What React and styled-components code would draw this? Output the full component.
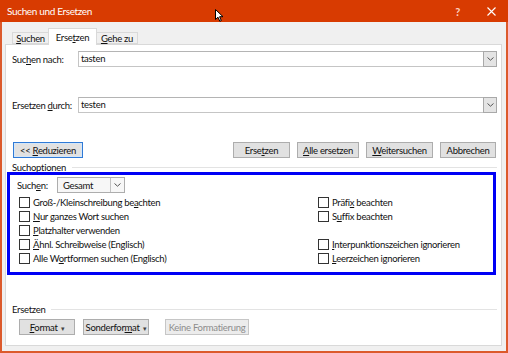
import React from "react";
import styled, { createGlobalStyle } from "styled-components";

const FONT = `Lato, "Open Sans", sans-serif`;

const GlobalStyle = createGlobalStyle`
	html, body {
		margin: 0;
		padding: 0;
		background: #ffffff;
	}
	body {
		font-family: ${FONT};
		font-size: 9.5px;
		letter-spacing: -0.3px;
		color: #111111;
	}
	* {
		box-sizing: border-box;
	}
	u {
		text-decoration-thickness: 1px;
		text-underline-offset: 1px;
	}
`;

const topOptions = [
	{ left: <>Groß-/Kleinschreibung be<u>a</u>chten</>, right: <>Präfi<u>x</u> beachten</> },
	{ left: <><u>N</u>ur ganzes Wort suchen</>, right: <>S<u>u</u>ffix beachten</> },
	{ left: <><u>P</u>latzhalter verwenden</>, right: null },
	{ left: <><u>Ä</u>hnl. Schreibweise (Englisch)</>, right: <><u>I</u>nterpunktionszeichen ignorieren</> },
	{ left: <>Alle W<u>o</u>rtformen suchen (Englisch)</>, right: <><u>L</u>eerzeichen ignorieren</> },
];

function Chevron() {
	return (
		<svg width="7" height="4" viewBox="0 0 7 4">
			<path d="M0.5 0.5 L3.5 3.2 L6.5 0.5" fill="none" stroke="#555" strokeWidth="1" />
		</svg>
	);
}

function Combo({ value }) {
	return (
		<ComboBox>
			<ComboText>{value}</ComboText>
			<ComboButton>
				<Chevron />
			</ComboButton>
		</ComboBox>
	);
}

function Option({ children }) {
	return (
		<OptionRow>
			<CheckBox />
			<span>{children}</span>
		</OptionRow>
	);
}

export default function App() {
	return (
		<>
			<GlobalStyle />
			<Window>
				<TitleBar>
					<Title>Suchen und Ersetzen</Title>
					<TitleControls>
						<HelpGlyph>?</HelpGlyph>
						<svg width="9" height="9" viewBox="0 0 9 9">
							<path d="M0.5 0.5 L8.5 8.5 M8.5 0.5 L0.5 8.5" stroke="#fff" strokeWidth="1.1" />
						</svg>
					</TitleControls>
					<Cursor width="9" height="13" viewBox="0 0 9 13">
						<path
							d="M0.5 0.5 L0.5 10.5 L3 8.2 L4.8 12.3 L6.3 11.6 L4.6 7.7 L8 7.7 Z"
							fill="#fff"
							stroke="#000"
							strokeWidth="1"
							strokeLinejoin="round"
						/>
					</Cursor>
				</TitleBar>

				<Body>
					<Tabs>
						<Tab $w={37}>
							<span>
								<u>S</u>uchen
							</span>
						</Tab>
						<Tab $w={49} $active>
							<span>
								Erse<u>t</u>zen
							</span>
						</Tab>
						<Tab $w={42}>
							<span>
								<u>G</u>ehe zu
							</span>
						</Tab>
					</Tabs>

					<Panel>
						<FieldRow>
							<FieldLabel>
								Suc<u>h</u>en nach:
							</FieldLabel>
							<Combo value="tasten" />
						</FieldRow>
						<FieldRow $gap={30}>
							<FieldLabel>
								Ersetzen <u>d</u>urch:
							</FieldLabel>
							<Combo value="testen" />
						</FieldRow>

						<ButtonBar>
							<Button $w={70} $default>
								<span>
									&lt;&lt; <u>R</u>eduzieren
								</span>
							</Button>
							<ButtonGroup>
								<Button $w={57}>
									<span>
										Erse<u>t</u>zen
									</span>
								</Button>
								<Button $w={62}>
									<span>
										<u>A</u>lle ersetzen
									</span>
								</Button>
								<Button $w={67}>
									<span>
										<u>W</u>eitersuchen
									</span>
								</Button>
								<Button $w={56}>
									<span>Abbrechen</span>
								</Button>
							</ButtonGroup>
						</ButtonBar>

						<GroupTitle $top={4}>Suchoptionen</GroupTitle>

						<Highlight>
							<ScopeRow>
								<ScopeLabel>
									Such<u>e</u>n:
								</ScopeLabel>
								<Select>
									<span>Gesamt</span>
									<SelectButton>
										<Chevron />
									</SelectButton>
								</Select>
							</ScopeRow>
							<OptionGrid>
								{topOptions.map((row, i) => (
									<React.Fragment key={i}>
										<Option>{row.left}</Option>
										{row.right ? <Option>{row.right}</Option> : <OptionRow />}
									</React.Fragment>
								))}
							</OptionGrid>
						</Highlight>

						<GroupTitle $top={29}>Ersetzen</GroupTitle>

						<FormatBar>
							<Button $w={56}>
								<span>
									<u>F</u>ormat <Caret>▾</Caret>
								</span>
							</Button>
							<Button $w={66}>
								<span>
									Sonderfor<u>m</u>at <Caret>▾</Caret>
								</span>
							</Button>
							<Button $w={84} $disabled $gapLeft={8}>
								<span>Keine Formatierung</span>
							</Button>
						</FormatBar>
					</Panel>
				</Body>
			</Window>
		</>
	);
}

const Window = styled.div`
	position: relative;
	width: 508px;
	height: 353px;
	display: flex;
	flex-direction: column;
	background: #f0f0f0;
	border: 2px solid #dc5a2c;
	border-top: none;
`;

const TitleBar = styled.div`
	position: relative;
	height: 22px;
	margin: 0 -2px;
	padding: 0 12px 0 7px;
	display: flex;
	align-items: center;
	justify-content: space-between;
	background: #d83b01;
	color: #ffffff;
`;

const Title = styled.span`
	font-size: 10px;
	letter-spacing: -0.35px;
`;

const TitleControls = styled.div`
	display: flex;
	align-items: center;
	gap: 27px;
`;

const HelpGlyph = styled.span`
	font-size: 11px;
	font-weight: 700;
	color: #ffd2c0;
`;

const Cursor = styled.svg`
	position: absolute;
	left: 215px;
	top: 9px;
`;

const Body = styled.div`
	flex: 1;
	display: flex;
	flex-direction: column;
	padding: 6px 4px 5px 3px;
`;

const Tabs = styled.div`
	display: flex;
	align-items: flex-end;
	height: 16px;
	margin-left: 7px;
	position: relative;
	z-index: 1;
`;

const Tab = styled.div`
	width: ${(p) => p.$w}px;
	height: ${(p) => (p.$active ? "17px" : "12px")};
	display: flex;
	align-items: center;
	justify-content: center;
	padding-top: ${(p) => (p.$active ? "0" : "1px")};
	background: ${(p) => (p.$active ? "#ffffff" : "#f0f0f0")};
	border: 1px solid #d9d9d9;
	border-bottom: ${(p) => (p.$active ? "none" : "1px solid #d9d9d9")};
	margin-bottom: ${(p) => (p.$active ? "-1px" : "0")};
	& + & {
		margin-left: -1px;
	}
`;

const Panel = styled.div`
	flex: 1;
	display: flex;
	flex-direction: column;
	background: #ffffff;
	border: 1px solid #d9d9d9;
`;

const FieldRow = styled.div`
	display: flex;
	align-items: center;
	margin-top: ${(p) => p.$gap ?? 6}px;
	padding: 0 4px 0 6px;
`;

const FieldLabel = styled.label`
	width: 66px;
	flex-shrink: 0;
	white-space: nowrap;
`;

const ComboBox = styled.div`
	flex: 1;
	height: 16px;
	display: flex;
	align-items: stretch;
	border: 1px solid #c5c5c5;
	border-top-color: #b4b4b4;
	background: #ffffff;
`;

const ComboText = styled.span`
	flex: 1;
	padding-left: 2px;
	line-height: 14px;
`;

const ComboButton = styled.span`
	width: 14px;
	display: flex;
	align-items: center;
	justify-content: center;
	background: #e4e4e4;
	border: 1px solid #a9a9a9;
	margin: -1px -1px -1px 0;
`;

const ButtonBar = styled.div`
	display: flex;
	justify-content: space-between;
	margin-top: 29px;
	padding: 0 5px 0 7px;
`;

const ButtonGroup = styled.div`
	display: flex;
	gap: 7px;
`;

const Button = styled.div`
	width: ${(p) => p.$w}px;
	height: 16px;
	margin-left: ${(p) => p.$gapLeft ?? 0}px;
	display: flex;
	align-items: center;
	justify-content: center;
	white-space: nowrap;
	background: ${(p) => (p.$disabled ? "#ececec" : "#e1e1e1")};
	color: ${(p) => (p.$disabled ? "#8c8c8c" : "#111111")};
	border: 1px solid
		${(p) => (p.$default ? "#2f7ad6" : p.$disabled ? "#c6c6c6" : "#adadad")};
	box-shadow: ${(p) => (p.$default ? "inset 0 0 0 1px #d5e6f7" : "none")};
`;

const Caret = styled.span`
	font-size: 7px;
	color: #444;
	margin-left: 1px;
`;

const GroupTitle = styled.div`
	display: flex;
	align-items: center;
	gap: 6px;
	margin-top: ${(p) => p.$top}px;
	padding: 0 4px 0 6px;
	height: 10px;

	&::after {
		content: "";
		flex: 1;
		height: 1px;
		background: #e3e3e3;
	}
`;

const Highlight = styled.div`
	margin: 0 5px 0 1px;
	height: 103px;
	border: 3px solid #0000f5;
	padding: 2px 0 0 7px;
`;

const ScopeRow = styled.div`
	display: flex;
	align-items: center;
	height: 16px;
`;

const ScopeLabel = styled.span`
	width: 40px;
`;

const Select = styled.div`
	width: 68px;
	height: 16px;
	display: flex;
	align-items: center;
	justify-content: space-between;
	padding-left: 5px;
	border: 1px solid #adadad;
	background: #f7f7f7;
`;

const SelectButton = styled.span`
	width: 14px;
	align-self: stretch;
	display: flex;
	align-items: center;
	justify-content: center;
	border-left: 1px solid #c2c2c2;
	background: #f7f7f7;
`;

const OptionGrid = styled.div`
	display: grid;
	grid-template-columns: 299px 1fr;
	margin-top: 2px;
	padding-left: 2px;
`;

const OptionRow = styled.div`
	display: flex;
	align-items: center;
	gap: 3px;
	height: 14px;
	white-space: nowrap;
`;

const CheckBox = styled.span`
	width: 11px;
	height: 11px;
	flex-shrink: 0;
	border: 1px solid #333333;
	background: #ffffff;
`;

const FormatBar = styled.div`
	display: flex;
	gap: 8px;
	margin-top: 5px;
	padding-left: 13px;
`;
